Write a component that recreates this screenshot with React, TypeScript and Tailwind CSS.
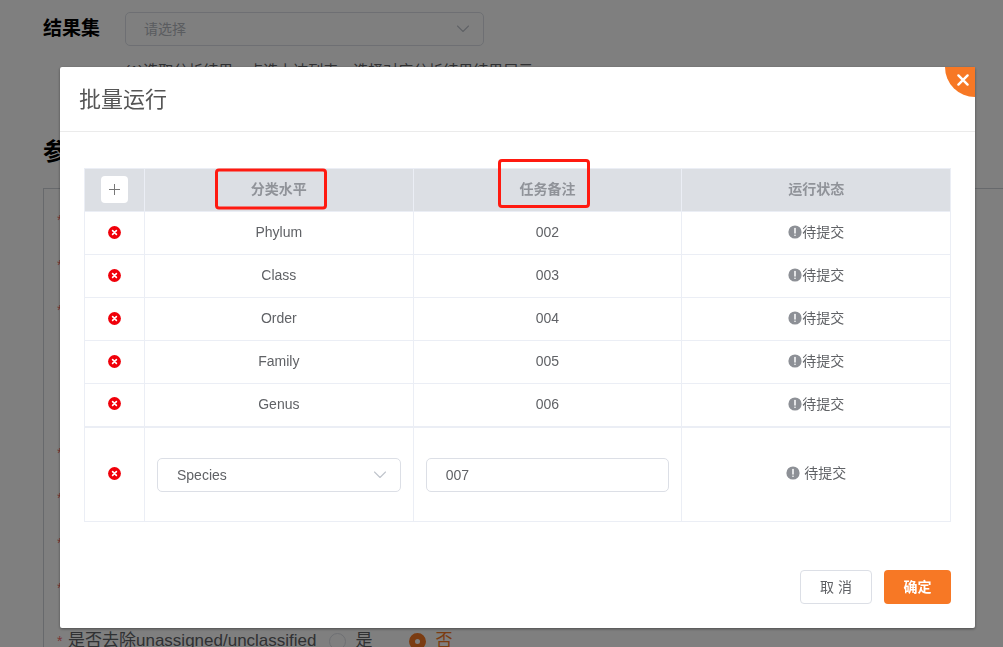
import React, { useState } from "react";

type Task = { level: string; remark: string };

const TASKS: Task[] = [
  { level: "Phylum", remark: "002" },
  { level: "Class", remark: "003" },
  { level: "Order", remark: "004" },
  { level: "Family", remark: "005" },
  { level: "Genus", remark: "006" },
];

function Chevron() {
  return (
    <svg
      viewBox="0 0 14 14"
      className="pointer-events-none absolute top-2.5 right-3.5 size-3.5"
      fill="none"
      stroke="#c0c4cc"
      strokeWidth="1.1"
      strokeLinecap="round"
      strokeLinejoin="round"
    >
      <path d="M1.5 4 7 9.5 12.5 4" />
    </svg>
  );
}

function DeleteButton({ name }: { name: string }) {
  return (
    <button type="button" aria-label={`删除 ${name}`} className="mx-auto block cursor-pointer">
      <svg viewBox="0 0 13 13" className="size-[13px]">
        <circle cx="6.5" cy="6.5" r="6.4" fill="#f0000a" />
        <path d="M4.6 4.6 8.4 8.4M8.4 4.6 4.6 8.4" stroke="#fff" strokeWidth="1.6" strokeLinecap="round" />
      </svg>
    </button>
  );
}

function Pending({ className }: { className?: string }) {
  return (
    <span className={`flex items-center justify-center ${className ?? ""}`}>
      <svg viewBox="0 0 14 14" className="size-[14px]">
        <circle cx="7" cy="7" r="6.6" fill="#8d9096" />
        <path d="M7 3.6V8" stroke="#fff" strokeWidth="1.5" strokeLinecap="round" />
        <circle cx="7" cy="10.3" r="0.8" fill="#fff" />
      </svg>
      待提交
    </span>
  );
}

function RequiredRow({ children, className }: { children?: React.ReactNode; className: string }) {
  return (
    <div className={`flex items-center ${className}`}>
      <span className="w-[11px] text-sm text-[#f56c6c]">*</span>
      {children}
    </div>
  );
}

function Background() {
  return (
    <main className="pt-3 pl-[43px]">
      <div className="flex items-center">
        <label htmlFor="resultSet" className="w-[82px] text-[19px] font-bold text-black">
          结果集
        </label>
        <div className="relative w-[359px]">
          <select
            id="resultSet"
            className="block h-[34px] w-full appearance-none rounded-[5px] border border-[#dcdfe6] bg-white pl-[18px] text-sm text-[#b4b8c0]"
          >
            <option>请选择</option>
          </select>
          <Chevron />
        </div>
      </div>
      <p className="mt-[15px] ml-[82px] text-[15px] leading-5 text-[#606266]">
        (1)选取分析结果，点选上达列表，选择对应分析结果结果展示
      </p>
      <h2 className="mt-[55px] text-2xl leading-8 font-bold text-black">参数</h2>
      <section className="mt-5 border-t border-l border-[#cfd2d8] pt-2 pl-[13px] text-[17px] text-[#606266]">
        <RequiredRow className="h-[45px]" />
        <RequiredRow className="h-[45px]" />
        <RequiredRow className="mb-[98px] h-[45px]" />
        <RequiredRow className="h-[45px]" />
        <RequiredRow className="h-[45px]" />
        <RequiredRow className="h-[45px]" />
        <RequiredRow className="h-[45px]" />
        <RequiredRow className="h-[62px]">
          <fieldset className="flex items-center">
            <legend className="float-left">是否去除unassigned/unclassified</legend>
            <label className="ml-3 flex items-center gap-2.5">
              <input
                type="radio"
                name="unassigned"
                className="size-[17px] appearance-none rounded-full border border-[#dcdfe6] bg-white"
              />
              是
            </label>
            <label className="ml-9 flex items-center gap-2.5 text-[#f77825]">
              <input
                type="radio"
                name="unassigned"
                defaultChecked
                className="size-[17px] appearance-none rounded-full border-[6px] border-[#f77825] bg-white"
              />
              否
            </label>
          </fieldset>
        </RequiredRow>
      </section>
    </main>
  );
}

export default function App() {
  const [level, setLevel] = useState("Species");
  const [remark, setRemark] = useState("007");
  const cell = "border border-[#ebeef5] px-0 pt-0 pb-0.5 text-center";
  const formCell = "border border-t-2 border-[#ebeef5] px-3 pt-0.5 pb-0";

  return (
    <div className="h-screen overflow-hidden bg-white font-['Liberation_Sans','Noto_Sans_CJK_SC',sans-serif]">
      <Background />
      <div className="fixed inset-0 overflow-hidden bg-black/50 pt-[67px] pr-7 pl-[60px]">
        <div
          role="dialog"
          aria-labelledby="dialogTitle"
          className="relative rounded-xs bg-white text-sm text-[#606266] shadow-[0_1px_3px_rgba(0,0,0,0.4)]"
        >
          <header className="border-b border-[#ebebeb] px-[19px] pt-[17px] pb-[15px]">
            <h1 id="dialogTitle" className="text-[22px] leading-8 text-[#555]">
              批量运行
            </h1>
          </header>
          <button
            type="button"
            aria-label="关闭"
            className="absolute top-0 right-0 flex size-[30px] cursor-pointer items-center justify-center rounded-tr-xs rounded-bl-full bg-[#f77825] pb-1 pl-1.5"
          >
            <svg viewBox="0 0 14 14" className="size-3.5" stroke="#fff" strokeWidth="2.4" strokeLinecap="round">
              <path d="M2.4 2.4 11.6 11.6M11.6 2.4 2.4 11.6" />
            </svg>
          </button>

          <div className="px-6 pt-9 pb-6">
            <table className="w-full table-fixed border-collapse">
              <thead>
                <tr className="h-[43px] bg-[#dcdfe4] font-bold text-[#909399]">
                  <th className={`w-[60px] ${cell}`}>
                    <button
                      type="button"
                      aria-label="添加"
                      className="mx-auto flex size-[27px] cursor-pointer items-center justify-center rounded bg-white"
                    >
                      <svg viewBox="0 0 13 13" className="size-[13px]" stroke="#777" strokeWidth="1">
                        <path d="M6.5 1V12M1 6.5H12" />
                      </svg>
                    </button>
                  </th>
                  <th className={cell}>
                    <div className="relative">
                      分类水平
                      <span className="absolute top-1/2 left-1/2 h-[41px] w-28 -translate-x-16 -translate-y-1/2 rounded border-3 border-[#ff1a10]" />
                    </div>
                  </th>
                  <th className={cell}>
                    <div className="relative">
                      任务备注
                      <span className="absolute bottom-1/2 left-1/2 h-[49px] w-[92px] -translate-x-[49px] translate-y-[19px] rounded border-3 border-[#ff1a10]" />
                    </div>
                  </th>
                  <th className={cell}>运行状态</th>
                </tr>
              </thead>
              <tbody>
                {TASKS.map((task) => (
                  <tr key={task.level} className="h-[43px]">
                    <td className={cell}>
                      <DeleteButton name={task.level} />
                    </td>
                    <td className={cell}>{task.level}</td>
                    <td className={cell}>{task.remark}</td>
                    <td className={cell}>
                      <Pending />
                    </td>
                  </tr>
                ))}
                <tr className="h-[95px]">
                  <td className={`${cell} border-t-2`}>
                    <DeleteButton name={level} />
                  </td>
                  <td className={formCell}>
                    <div className="relative">
                      <select
                        aria-label="分类水平"
                        value={level}
                        onChange={(e) => setLevel(e.target.value)}
                        className="block h-[34px] w-full appearance-none rounded-[5px] border border-[#dcdfe6] bg-white pl-[19px]"
                      >
                        <option>Species</option>
                        {TASKS.map((task) => (
                          <option key={task.level}>{task.level}</option>
                        ))}
                      </select>
                      <Chevron />
                    </div>
                  </td>
                  <td className={formCell}>
                    <input
                      type="text"
                      aria-label="任务备注"
                      value={remark}
                      onChange={(e) => setRemark(e.target.value)}
                      className="block h-[34px] w-full rounded-[5px] border border-[#dcdfe6] bg-white pl-[19px]"
                    />
                  </td>
                  <td className={`${cell} border-t-2`}>
                    <Pending className="gap-1" />
                  </td>
                </tr>
              </tbody>
            </table>

            <footer className="mt-12 flex justify-end gap-3">
              <button
                type="button"
                className="h-[34px] w-[72px] cursor-pointer rounded border border-[#dcdfe6] bg-white"
              >
                取 消
              </button>
              <button
                type="button"
                className="h-[34px] w-[67px] cursor-pointer rounded bg-[#f77825] font-bold text-white"
              >
                确定
              </button>
            </footer>
          </div>
        </div>
      </div>
    </div>
  );
}
